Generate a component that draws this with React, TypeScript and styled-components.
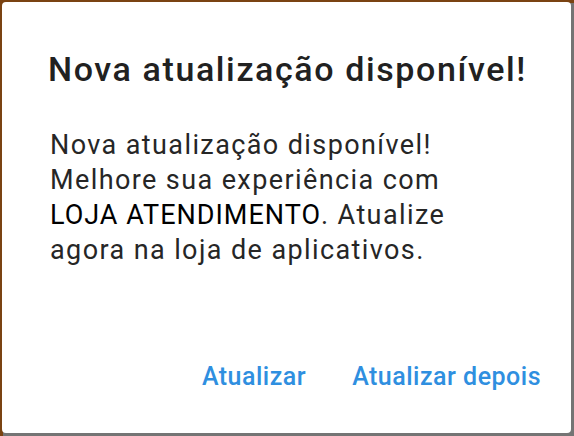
import React from 'react'
import styled, { createGlobalStyle } from 'styled-components'

const GlobalStyle = createGlobalStyle`
    html, body {
        margin: 0;
        padding: 0;
        width: 100%;
        height: 100%;
        overflow: hidden;
    }
    body {
        font-family: Roboto, 'Noto Sans', sans-serif;
    }
`

// dimmed app showing behind the dialog
const Backdrop = styled.div`
    box-sizing: border-box;
    width: 574px;
    height: 436px;
    padding: 2px 3px 3px 2px;
    background:
        linear-gradient(to bottom, #7a4312 0px, #7a4312 3px, transparent 3px),
        linear-gradient(to right, #7a4312 0px, #7a4312 3px, transparent 3px),
        #747474;
`

const Dialog = styled.div`
    box-sizing: border-box;
    height: 100%;
    background: #fff;
    border-radius: 4px;
    display: flex;
    flex-direction: column;
    padding: 49px 30px 42px 46px;
`

const Title = styled.h1`
    margin: 0;
    font-size: 34px;
    font-weight: 500;
    letter-spacing: 1.6px;
    color: #212121;
    line-height: 36px;
`

const Message = styled.p`
    margin: 41px 0 0 2px;
    font-size: 27px;
    letter-spacing: 1.4px;
    line-height: 35px;
    color: #262626;
    max-width: 420px;
`

const AppName = styled.span`
    color: #000;
    letter-spacing: 1px;
`

const Actions = styled.div`
    margin-top: auto;
    display: flex;
    justify-content: flex-end;
    gap: 46px;
`

const ActionButton = styled.button`
    border: none;
    background: none;
    padding: 0;
    font-family: Roboto, sans-serif;
    font-size: 25px;
    font-weight: 500;
    letter-spacing: 0.5px;
    color: #2f8fe0;
    cursor: pointer;
`

export default function App() {
    return (
        <>
            <GlobalStyle />
            <Backdrop>
                <Dialog>
                    <Title>Nova atualização disponível!</Title>
                    <Message>
                        Nova atualização disponível! Melhore sua experiência com{' '}
                        <AppName>LOJA ATENDIMENTO</AppName>. Atualize agora na loja de aplicativos.
                    </Message>
                    <Actions>
                        <ActionButton>Atualizar</ActionButton>
                        <ActionButton>Atualizar depois</ActionButton>
                    </Actions>
                </Dialog>
            </Backdrop>
        </>
    )
}
